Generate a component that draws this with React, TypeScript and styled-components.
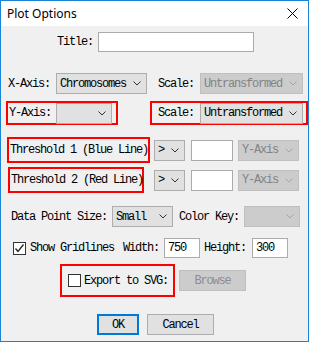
import * as React from "react"
import styled, { createGlobalStyle } from "styled-components"

const GlobalStyle = createGlobalStyle`
    body {
        margin: 0;
        background: #ffffff;
    }
`

const Window = styled.div`
    width: 309px;
    height: 342px;
    box-sizing: border-box;
    border: 1px solid #1883d7;
    background: #f0f0f0;
    font-family: "Liberation Mono", monospace;
    font-size: 12px;
    letter-spacing: -1.2px;
    color: #000;
`

const TitleBar = styled.div`
    height: 25px;
    background: #ffffff;
    display: flex;
    align-items: center;
    justify-content: space-between;
    padding-left: 6px;
    padding-right: 10px;
`

const TitleText = styled.span`
    font-family: "Noto Sans", sans-serif;
    font-size: 12px;
    letter-spacing: 0;
`

const Row = styled.div<{ $mt: number; $h: number; $pl: number }>`
    display: flex;
    align-items: center;
    margin-top: ${p => p.$mt}px;
    height: ${p => p.$h}px;
    padding-left: ${p => p.$pl}px;
`

const Label = styled.span<{ $w: number; $ml?: number }>`
    width: ${p => p.$w}px;
    margin-left: ${p => p.$ml || 0}px;
    flex: none;
    white-space: nowrap;
`

const RedBox = styled.div<{ $w: number; $h: number; $ml?: number; $pl: number }>`
    box-sizing: border-box;
    width: ${p => p.$w}px;
    height: ${p => p.$h}px;
    margin-left: ${p => p.$ml || 0}px;
    padding-left: ${p => p.$pl}px;
    border: 2px solid #ff0000;
    display: flex;
    align-items: center;
    flex: none;
`

const SelectBox = styled.div<{ $w: number; $ml?: number; $disabled?: boolean }>`
    box-sizing: border-box;
    width: ${p => p.$w}px;
    height: 21px;
    margin-left: ${p => p.$ml || 0}px;
    flex: none;
    display: flex;
    align-items: center;
    justify-content: space-between;
    padding: 0 5px 0 3px;
    border: 1px solid ${p => (p.$disabled ? "#bfbfbf" : "#adadad")};
    background: ${p => (p.$disabled ? "#cccccc" : "#e1e1e1")};
    color: ${p => (p.$disabled ? "#838383" : "#000")};
    white-space: nowrap;
    overflow: hidden;
`

const TextInput = styled.div<{ $w: number; $ml?: number }>`
    box-sizing: border-box;
    width: ${p => p.$w}px;
    height: 21px;
    margin-left: ${p => p.$ml || 0}px;
    flex: none;
    border: 1px solid #ababab;
    background: #ffffff;
    display: flex;
    align-items: center;
    padding-left: 3px;
`

const CheckBox = styled.div<{ $ml?: number }>`
    box-sizing: border-box;
    width: 13px;
    height: 13px;
    margin-left: ${p => p.$ml || 0}px;
    flex: none;
    border: 1px solid #333333;
    background: #ffffff;
    display: flex;
    align-items: center;
    justify-content: center;
`

const Button = styled.div<{ $w: number; $ml?: number; $default?: boolean; $disabled?: boolean }>`
    box-sizing: border-box;
    width: ${p => p.$w}px;
    height: 21px;
    margin-left: ${p => p.$ml || 0}px;
    flex: none;
    display: flex;
    align-items: center;
    justify-content: center;
    border: ${p => (p.$default ? "2px solid #0078d7" : p.$disabled ? "1px solid #bfbfbf" : "1px solid #adadad")};
    background: ${p => (p.$disabled ? "#cccccc" : "#e1e1e1")};
    color: ${p => (p.$disabled ? "#8c8c8c" : "#000")};
`

const Chevron = ({ disabled }: { disabled?: boolean }) => (
    <svg width="8" height="5" viewBox="0 0 8 5" style={{ flex: "none" }}>
        <polyline points="0.5,0.5 4,4 7.5,0.5" fill="none" stroke={disabled ? "#a6a6a6" : "#333"} strokeWidth="1" />
    </svg>
)

const Select = ({ w, ml, value, disabled }: { w: number; ml?: number; value?: string; disabled?: boolean }) => (
    <SelectBox $w={w} $ml={ml} $disabled={disabled}>
        <span>{value || ""}</span>
        <Chevron disabled={disabled} />
    </SelectBox>
)

const Tick = () => (
    <svg width="11" height="11" viewBox="0 0 11 11">
        <polyline points="1.5,5.5 4,8.5 9.5,1.5" fill="none" stroke="#222" strokeWidth="1.3" />
    </svg>
)

export default function App() {
    return (
        <>
            <GlobalStyle />
            <Window>
                <TitleBar>
                    <TitleText>Plot Options</TitleText>
                    <svg width="11" height="11" viewBox="0 0 11 11">
                        <path d="M0.5 0.5 L10.5 10.5 M10.5 0.5 L0.5 10.5" stroke="#000" strokeWidth="1" />
                    </svg>
                </TitleBar>

                <Row $mt={6} $h={20} $pl={56}>
                    <Label $w={41}>Title:</Label>
                    <TextInput $w={156} style={{ height: 20 }} />
                </Row>

                <Row $mt={21} $h={21} $pl={7}>
                    <Label $w={48}>X-Axis:</Label>
                    <Select w={91} value="Chromosomes" />
                    <Label $w={42} $ml={11}>Scale:</Label>
                    <Select w={103} value="Untransformed" disabled />
                </Row>

                <Row $mt={7} $h={24} $pl={5}>
                    <RedBox $w={112} $h={24} $pl={1}>
                        <Label $w={47}>Y-Axis:</Label>
                        <Select w={56} />
                    </RedBox>
                    <RedBox $w={158} $h={24} $ml={32} $pl={6}>
                        <Label $w={42}>Scale:</Label>
                        <Select w={103} value="Untransformed" />
                    </RedBox>
                </Row>

                <Row $mt={12} $h={26} $pl={6}>
                    <RedBox $w={143} $h={26} $pl={1}>
                        <Label $w={138}>Threshold 1 (Blue Line)</Label>
                    </RedBox>
                    <Select w={31} ml={4} value=">" />
                    <TextInput $w={42} $ml={6} />
                    <Select w={61} ml={5} value="Y-Axis" disabled />
                </Row>

                <Row $mt={4} $h={26} $pl={7}>
                    <RedBox $w={136} $h={26} $pl={1}>
                        <Label $w={132}>Threshold 2 (Red Line)</Label>
                    </RedBox>
                    <Select w={31} ml={10} value=">" />
                    <TextInput $w={42} $ml={6} />
                    <Select w={61} ml={5} value="Y-Axis" disabled />
                </Row>

                <Row $mt={13} $h={21} $pl={10}>
                    <Label $w={101}>Data Point Size:</Label>
                    <Select w={61} value="Small" />
                    <Label $w={65} $ml={6}>Color Key:</Label>
                    <Select w={56} disabled />
                </Row>

                <Row $mt={11} $h={20} $pl={12}>
                    <CheckBox>
                        <Tick />
                    </CheckBox>
                    <Label $w={93} $ml={4}>Show Gridlines</Label>
                    <Label $w={41}>Width:</Label>
                    <TextInput $w={36} style={{ height: 20 }}>750</TextInput>
                    <Label $w={48} $ml={4}>Height:</Label>
                    <TextInput $w={36} style={{ height: 20 }}>300</TextInput>
                </Row>

                <Row $mt={6} $h={33} $pl={59}>
                    <RedBox $w={115} $h={33} $pl={6}>
                        <CheckBox />
                        <Label $w={88} $ml={3}>Export to SVG:</Label>
                    </RedBox>
                    <Button $w={67} $ml={4} $disabled>Browse</Button>
                </Row>

                <Row $mt={17} $h={21} $pl={96}>
                    <Button $w={42} $default>OK</Button>
                    <Button $w={67} $ml={8}>Cancel</Button>
                </Row>
            </Window>
        </>
    )
}
